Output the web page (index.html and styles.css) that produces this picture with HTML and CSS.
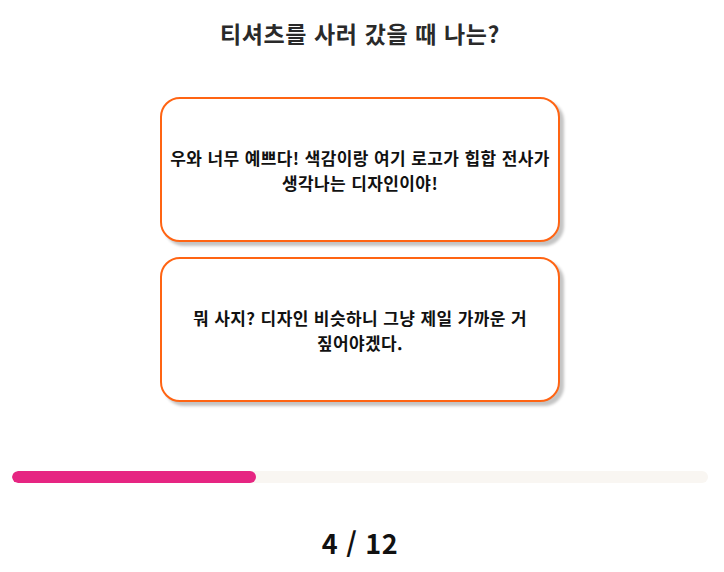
FILE: index.html
```html
<!DOCTYPE html>
<html lang="ko">
<head>
<meta charset="utf-8">
<link rel="stylesheet" href="styles.css">
</head>
<body>
<div class="page">
  <h1 class="title">티셔츠를 사러 갔을 때 나는?</h1>
  <div class="options">
    <button class="option">우와 너무 예쁘다! 색감이랑 여기 로고가 힙합 전사가 생각나는 디자인이야!</button>
    <button class="option">뭐 사지? 디자인 비슷하니 그냥 제일 가까운 거 짚어야겠다.</button>
  </div>
  <div class="progress"><div class="fill" style="width:35%"></div></div>
  <div class="count">4 / 12</div>
</div>
</body>
</html>
```
FILE: styles.css
```css
html, body { margin: 0; padding: 0; background: #fff; }
body { font-family: "Noto Sans CJK KR", "Noto Sans", sans-serif; color: #222; }
.page { width: 720px; display: flex; flex-direction: column; align-items: center; }
.title { margin: 16px 0 0; font-size: 23px; line-height: 34px; font-weight: 700; color: #2a2a2a; letter-spacing: 0.6px; }
.options { margin-top: 47px; display: flex; flex-direction: column; gap: 15px; }
.option {
  width: 400px; height: 145px; box-sizing: border-box;
  border: 2px solid #ff6413; border-radius: 20px; background: #fff;
  box-shadow: 4px 4px 3px #c4c4c4;
  font-family: "Noto Sans CJK KR", sans-serif; font-size: 17px; font-weight: 700; line-height: 25px;
  letter-spacing: 0.4px; word-break: keep-all;
  color: #111; padding: 0; text-align: center; cursor: pointer;
}
.progress { margin-top: 69px; width: 696px; height: 12px; background: #f9f6f2; border-radius: 6px; overflow: hidden; }
.fill { height: 100%; background: #e62582; border-radius: 6px; }
.count { margin-top: 44px; font-size: 27px; font-weight: 700; color: #111; line-height: 32px; letter-spacing: 0.5px; }
```
